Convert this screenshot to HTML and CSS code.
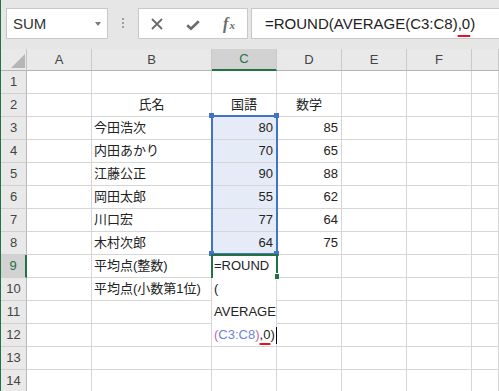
FILE: index.html
```html
<!DOCTYPE html>
<html lang="ja">
<head>
<meta charset="utf-8">
<title>Excel ROUND</title>
<link rel="stylesheet" href="styles.css">
</head>
<body>
<div class="app">
  <div class="toolbar">
    <div class="namebox"><span class="nb-text">SUM</span><span class="dd"></span></div>
    <div class="sep"><span class="dots"></span></div>
    <div class="fbtns">
      <span class="fbtn">
        <svg width="12" height="12" viewBox="0 0 12 12"><path d="M1 1 L11 11 M11 1 L1 11" stroke="#6b6b6b" stroke-width="1.8" fill="none"/></svg>
      </span>
      <span class="fbtn">
        <svg width="14" height="11" viewBox="0 0 14 11" class="chk"><path d="M1.2 5.2 L5 8.8 L12.8 1.2" stroke="#6b6b6b" stroke-width="2.6" fill="none"/></svg>
      </span>
      <span class="fbtn fx">f<span class="fx-x">x</span></span>
    </div>
    <div class="fbox">=ROUND(AVERAGE(C3:C8)<span class="squig">,0</span>)</div>
  </div>

  <div class="sheet">
    <div class="corner"><span class="tri"></span></div>
    <div class="ch">A</div>
    <div class="ch">B</div>
    <div class="ch ch-sel">C</div>
    <div class="ch">D</div>
    <div class="ch">E</div>
    <div class="ch">F</div>
    <div class="ch"></div>

    <div class="rh">1</div><div class="c"></div><div class="c"></div><div class="c"></div><div class="c"></div><div class="c"></div><div class="c"></div><div class="c"></div>
    <div class="rh">2</div><div class="c"></div><div class="c ctr">氏名</div><div class="c ctr">国語</div><div class="c ctr">数学</div><div class="c"></div><div class="c"></div><div class="c"></div>
    <div class="rh">3</div><div class="c"></div><div class="c">今田浩次</div><div class="c num sel">80</div><div class="c num">85</div><div class="c"></div><div class="c"></div><div class="c"></div>
    <div class="rh">4</div><div class="c"></div><div class="c">内田あかり</div><div class="c num sel">70</div><div class="c num">65</div><div class="c"></div><div class="c"></div><div class="c"></div>
    <div class="rh">5</div><div class="c"></div><div class="c">江藤公正</div><div class="c num sel">90</div><div class="c num">88</div><div class="c"></div><div class="c"></div><div class="c"></div>
    <div class="rh">6</div><div class="c"></div><div class="c">岡田太郎</div><div class="c num sel">55</div><div class="c num">62</div><div class="c"></div><div class="c"></div><div class="c"></div>
    <div class="rh">7</div><div class="c"></div><div class="c">川口宏</div><div class="c num sel">77</div><div class="c num">64</div><div class="c"></div><div class="c"></div><div class="c"></div>
    <div class="rh">8</div><div class="c"></div><div class="c">木村次郎</div><div class="c num sel">64</div><div class="c num">75</div><div class="c"></div><div class="c"></div><div class="c"></div>
    <div class="rh rh-sel">9</div><div class="c"></div><div class="c">平均点(整数)</div>
    <div class="editor">
      <div class="el">=ROUND</div>
      <div class="el">(</div>
      <div class="el">AVERAGE</div>
      <div class="el"><span class="par">(</span><span class="ref">C3:C8</span><span class="par">)</span><span class="squig2">,0</span>)<span class="cursor"></span></div>
    </div>
    <div class="c"></div><div class="c"></div><div class="c"></div><div class="c"></div>
    <div class="rh">10</div><div class="c"></div><div class="c">平均点(小数第1位)</div><div class="c"></div><div class="c"></div><div class="c"></div><div class="c"></div>
    <div class="rh">11</div><div class="c"></div><div class="c"></div><div class="c"></div><div class="c"></div><div class="c"></div><div class="c"></div>
    <div class="rh">12</div><div class="c"></div><div class="c"></div><div class="c"></div><div class="c"></div><div class="c"></div><div class="c"></div>
    <div class="rh">13</div><div class="c"></div><div class="c"></div><div class="c"></div><div class="c"></div><div class="c"></div><div class="c"></div><div class="c"></div>
    <div class="rh">14</div><div class="c"></div><div class="c"></div><div class="c"></div><div class="c"></div><div class="c"></div><div class="c"></div><div class="c"></div>

    <div class="range"></div>
    <div class="hdl hdl-tl"></div>
    <div class="hdl hdl-tr"></div>
    <div class="hdl hdl-bl"></div>
    <div class="hdl hdl-br"></div>
    <div class="active"></div>
    <div class="fill"></div>
  </div>
</div>
</body>
</html>
```

FILE: styles.css
```css
html, body {
  margin: 0;
  padding: 0;
  background: #fff;
}
body {
  width: 499px;
  height: 391px;
  overflow: hidden;
  font-family: "Liberation Sans", "Noto Sans CJK JP", sans-serif;
}
.app {
  border-left: 1px solid #217346;
  height: 391px;
  box-sizing: border-box;
  overflow: hidden;
}

/* toolbar */
.toolbar {
  height: 49px;
  box-sizing: border-box;
  background: #e6e6e6;
  display: flex;
  align-items: flex-start;
  padding: 8px 0 0 5px;
}
.namebox {
  width: 102px;
  height: 31px;
  box-sizing: border-box;
  border: 1px solid #c8c8c8;
  background: #fff;
  display: flex;
  align-items: center;
  padding-left: 6px;
  font-size: 15px;
  color: #333;
}
.nb-text { flex: 1; }
.dd {
  width: 0;
  height: 0;
  border-left: 3px solid transparent;
  border-right: 3px solid transparent;
  border-top: 4px solid #7a7a7a;
  margin-right: 6px;
  margin-top: 1px;
}
.sep {
  width: 30px;
  height: 31px;
  display: flex;
  justify-content: center;
}
.dots {
  width: 2px;
  height: 10px;
  margin-top: 10px;
  background: repeating-linear-gradient(to bottom, #a0a0a0 0 2px, transparent 2px 4px);
}
.fbtns {
  width: 110px;
  height: 31px;
  box-sizing: border-box;
  border: 1px solid #c8c8c8;
  background: #fff;
  display: flex;
  align-items: center;
}
.fbtn {
  width: 36px;
  height: 29px;
  display: flex;
  align-items: center;
  justify-content: center;
}
.chk { margin-top: 3px; }
.fx {
  font-family: "Liberation Serif", serif;
  font-style: italic;
  font-size: 16px;
  color: #6b6b6b;
  font-weight: bold;
}
.fx-x {
  font-size: 11px;
  margin-left: 1px;
  position: relative;
  top: 1px;
}
.fbox {
  flex: 1;
  height: 31px;
  box-sizing: border-box;
  border: 1px solid #c8c8c8;
  border-right: none;
  background: #fff;
  margin-left: 3px;
  padding-left: 13px;
  font-size: 15px;
  line-height: 29px;
  color: #222;
  white-space: nowrap;
}
.squig {
  text-decoration: underline;
  text-decoration-color: #e81123;
  text-decoration-thickness: 2px;
  text-underline-offset: 6px;
}

/* sheet */
.sheet {
  position: relative;
  display: grid;
  grid-template-columns: 26px 65px 120px 65px 65px 65px 65px 1fr;
  grid-template-rows: 22px;
  grid-auto-rows: 23px;
  font-size: 13px;
  color: #222;
}
.corner {
  background: #e9e9e9;
  border-right: 1px solid #c4c4c4;
  border-bottom: 1px solid #b4b4b4;
  display: flex;
  align-items: flex-end;
  justify-content: flex-end;
  padding: 0 1px 2px 0;
}
.tri {
  width: 0;
  height: 0;
  border-left: 14px solid transparent;
  border-bottom: 14px solid #b6b6b6;
}
.ch {
  background: #e9e9e9;
  border-right: 1px solid #c9c9c9;
  border-bottom: 1px solid #b4b4b4;
  text-align: center;
  line-height: 21px;
  color: #444;
}
.ch-sel {
  background: #d2d2d2;
  border-bottom: 2px solid #217346;
  line-height: 20px;
  color: #217346;
}
.rh {
  background: #e9e9e9;
  border-right: 1px solid #b8b8b8;
  border-bottom: 1px solid #d0d0d0;
  text-align: center;
  line-height: 22px;
  color: #444;
}
.rh-sel {
  background: #d2d2d2;
  border-right: 2px solid #217346;
  color: #217346;
}
.c {
  border-right: 1px solid #d6d6d6;
  border-bottom: 1px solid #d6d6d6;
  line-height: 22px;
  padding: 0 2px;
  white-space: nowrap;
  overflow: visible;
}
.ctr { text-align: center; }
.num { text-align: right; padding-right: 3px; }
.sel { background: #e6ecf7; }

.editor {
  grid-row: span 4;
  background: #fff;
  border-right: 1px solid #d6d6d6;
  border-bottom: 1px solid #d6d6d6;
  padding: 0 2px;
  white-space: nowrap;
}
.el {
  height: 23px;
  line-height: 22px;
}
.el:first-child { line-height: 22px; }
.par { color: #c068a6; }
.ref { color: #6b84d6; }
.squig2 {
  text-decoration: underline;
  text-decoration-color: #e81123;
  text-decoration-thickness: 2px;
  text-underline-offset: 4px;
}
.cursor {
  display: inline-block;
  width: 1px;
  height: 17px;
  background: #000;
  vertical-align: -5px;
  margin-left: 1px;
}

/* selection overlays */
.range {
  position: absolute;
  left: 210px;
  top: 66px;
  width: 67px;
  height: 140px;
  box-sizing: border-box;
  border: 2px solid #4472c4;
}
.hdl {
  position: absolute;
  width: 5px;
  height: 5px;
  background: #4472c4;
}
.hdl-tl { left: 208px; top: 64px; }
.hdl-tr { left: 273px; top: 64px; }
.hdl-bl { left: 208px; top: 202px; }
.hdl-br { left: 273px; top: 202px; }
.active {
  position: absolute;
  left: 210px;
  top: 205px;
  width: 67px;
  height: 24px;
  box-sizing: border-box;
  border: 2px solid #217346;
  border-bottom: none;
}
.fill {
  position: absolute;
  left: 273px;
  top: 224px;
  width: 4px;
  height: 5px;
  background: #217346;
  border: 1px solid #fff;
  border-right: none;
}
```
